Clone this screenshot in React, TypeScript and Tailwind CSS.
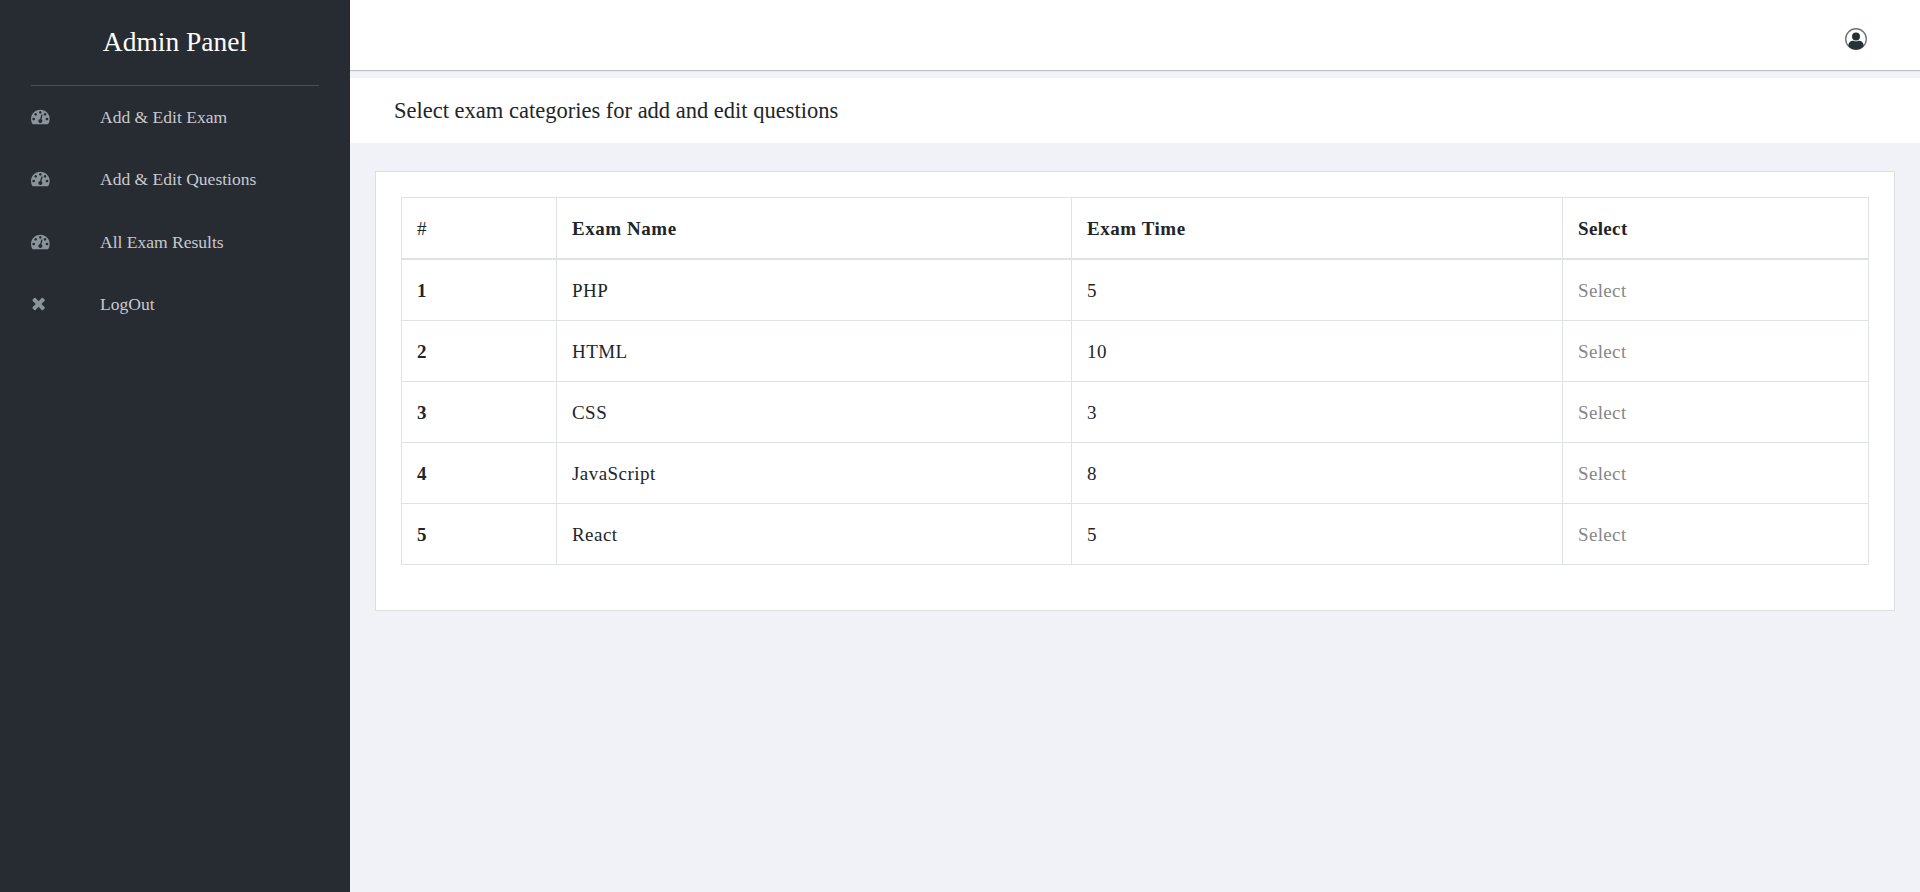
const exams = [
  { id: 1, name: "PHP", time: 5 },
  { id: 2, name: "HTML", time: 10 },
  { id: 3, name: "CSS", time: 3 },
  { id: 4, name: "JavaScript", time: 8 },
  { id: 5, name: "React", time: 5 },
];

const GAUGE =
  "M384 1152q0-53-37.5-90.5t-90.5-37.5-90.5 37.5-37.5 90.5 37.5 90.5 90.5 37.5 90.5-37.5 37.5-90.5zm192-448q0-53-37.5-90.5t-90.5-37.5-90.5 37.5-37.5 90.5 37.5 90.5 90.5 37.5 90.5-37.5 37.5-90.5zm428 481l101-382q6-26-7.5-48.5t-38.5-29.5-48 6.5-30 39.5l-101 382q-60 5-107 43.5t-63 98.5q-20 77 20 146t117 89 146-20 89-117q16-60-6-117t-72-91zm660-33q0-53-37.5-90.5t-90.5-37.5-90.5 37.5-37.5 90.5 37.5 90.5 90.5 37.5 90.5-37.5 37.5-90.5zm-640-640q0-53-37.5-90.5t-90.5-37.5-90.5 37.5-37.5 90.5 37.5 90.5 90.5 37.5 90.5-37.5 37.5-90.5zm448 192q0-53-37.5-90.5t-90.5-37.5-90.5 37.5-37.5 90.5 37.5 90.5 90.5 37.5 90.5-37.5 37.5-90.5zm320 448q0 261-141 483-19 29-54 29h-1402q-35 0-54-29-141-221-141-483 0-182 71-348t191-286 286-191 348-71 348 71 286 191 191 286 71 348z";
const CROSS =
  "M1490 1322q0 40-28 68l-136 136q-28 28-68 28t-68-28l-294-294-294 294q-28 28-68 28t-68-28l-136-136q-28-28-28-68t28-68l294-294-294-294q-28-28-28-68t28-68l136-136q28-28 68-28t68 28l294 294 294-294q28-28 68-28t68 28l136 136q28 28 28 68t-28 68l-294 294 294 294q28 28 28 68z";

const menu = [
  { label: "Add & Edit Exam", path: GAUGE, viewBox: "0 0 1792 1792" },
  { label: "Add & Edit Questions", path: GAUGE, viewBox: "0 0 1792 1792" },
  { label: "All Exam Results", path: GAUGE, viewBox: "0 0 1792 1792" },
  { label: "LogOut", path: CROSS, viewBox: "165 0 1792 1792" },
];

function Sidebar() {
  return (
    <aside className="w-[350px] shrink-0 bg-[#272c33] px-[31px]">
      <div className="flex h-[86px] items-start justify-center border-b border-[#4e4e52] pt-[21px]">
        <span className="text-[27.5px] leading-[42px] text-white">Admin Panel</span>
      </div>
      <nav>
        {menu.map((item) => (
          <a key={item.label} className="flex h-[62.3px] items-center" href="#">
            <span className="w-[69px] pb-[1.6px]">
              <svg viewBox={item.viewBox} className="block size-[18.67px] fill-[#8b939b]">
                <path d={item.path} />
              </svg>
            </span>
            <span className="text-[17.55px] leading-[30px] text-[#c8c9ce]">{item.label}</span>
          </a>
        ))}
      </nav>
    </aside>
  );
}

function UserIcon() {
  return (
    <svg viewBox="0 0 22 22" className="size-[22px]">
      <circle cx="11" cy="11" r="10.3" fill="#fff" stroke="#6c7676" strokeWidth="1.4" />
      <circle cx="11" cy="8.400" r="4" fill="#263238" />
      <path d="M3.500 18.200V17c0-2.900 2.400-4.300 5.200-4.300 1.300.7 3.300.7 4.600 0 2.800 0 5.200 1.400 5.200 4.300v1.200C16.600 20.500 13.900 21.600 11 21.600s-5.600-1.100-7.500-3.400z" fill="#263238" />
    </svg>
  );
}

function ExamTable() {
  const cell = "border border-[#dee2e6] pr-4 pl-[15px] pt-0.5 pb-0 text-left";
  return (
    <table className="w-[1467px] table-fixed border-collapse text-[19px] leading-7 tracking-[0.45px] text-[#212529]">
      <colgroup>
        <col className="w-[155px]" />
        <col className="w-[515px]" />
        <col className="w-[491px]" />
        <col className="w-[306px]" />
      </colgroup>
      <thead>
        <tr className="h-[61px] tracking-[0.55px]">
          <th className={`${cell} border-b-2 font-normal`}>#</th>
          <th className={`${cell} border-b-2 font-bold`}>Exam Name</th>
          <th className={`${cell} border-b-2 font-bold`}>Exam Time</th>
          <th className={`${cell} border-b-2 font-bold tracking-[0.35px]`}>Select</th>
        </tr>
      </thead>
      <tbody>
        {exams.map((exam, i) => (
          <tr key={exam.id} className={i === 0 ? "h-[62px]" : "h-[61px]"}>
            <th className={`${cell} font-bold`}>{exam.id}</th>
            <td className={cell}>{exam.name}</td>
            <td className={cell}>{exam.time}</td>
            <td className={cell}>
              <a href="#" className="tracking-[0.35px] text-[#878787]">Select</a>
            </td>
          </tr>
        ))}
      </tbody>
    </table>
  );
}

export default function App() {
  return (
    <div className="flex h-[892px] w-[1920px] overflow-hidden bg-[#f1f2f7] font-['Liberation_Serif','Times_New_Roman',serif]">
      <Sidebar />
      <div className="flex min-w-0 flex-1 flex-col">
        <header className="flex h-[70px] shrink-0 justify-end bg-white pt-[28px] pr-[53px] shadow-[0_1px_1px_rgba(0,0,0,0.2)]">
          <UserIcon />
        </header>
        <div className="mt-2 flex h-[65px] shrink-0 items-center bg-white pl-11">
          <h1 className="text-[22.5px] leading-8 text-[#212529]">
            Select exam categories for add and edit questions
          </h1>
        </div>
        <main className="mt-7 ml-[25px] h-[440px] w-[1520px] border border-[#dddee0] bg-white pt-[25px] pl-[25px]">
          <ExamTable />
        </main>
      </div>
    </div>
  );
}
